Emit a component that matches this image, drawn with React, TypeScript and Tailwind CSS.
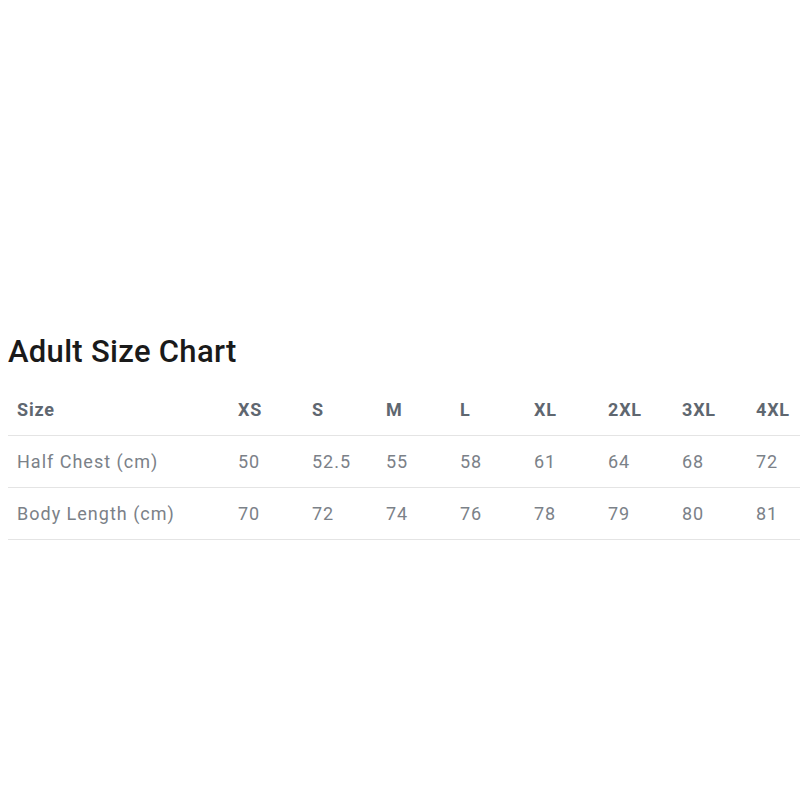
const sizes = ["XS", "S", "M", "L", "XL", "2XL", "3XL", "4XL"];

const rows = [
  { label: "Half Chest (cm)", values: ["50", "52.5", "55", "58", "61", "64", "68", "72"] },
  { label: "Body Length (cm)", values: ["70", "72", "74", "76", "78", "79", "80", "81"] },
];

export default function App() {
  return (
    <div className="w-[800px] h-[800px] overflow-hidden bg-white font-['Roboto',sans-serif]">
      <div className="pt-[332px] pl-2">
        <h2 className="text-[31px] leading-[40px] font-medium text-[#1a1a1a] tracking-[0.3px]">Adult Size Chart</h2>
        <table className="mt-[12px] w-[813px] border-collapse table-fixed">
          <colgroup>
            <col className="w-[221px]" />
            {sizes.map((s) => (
              <col key={s} className="w-[74px]" />
            ))}
          </colgroup>
          <thead>
            <tr className="border-b border-[#e4e4e4] h-[51px]">
              <th className="pl-[9px] text-left text-[18px] tracking-[0.8px] font-bold text-[#5f6770]">Size</th>
              {sizes.map((s) => (
                <th key={s} className="pl-[9px] text-left text-[18px] tracking-[0.8px] font-bold text-[#5f6770]">
                  {s}
                </th>
              ))}
            </tr>
          </thead>
          <tbody>
            {rows.map((r) => (
              <tr key={r.label} className="border-b border-[#e4e4e4] h-[52px]">
                <td className="pl-[9px] text-[18px] tracking-[1px] text-[#7b8188]">{r.label}</td>
                {r.values.map((v, i) => (
                  <td key={i} className="pl-[9px] text-[18px] tracking-[1px] text-[#7b8188]">
                    {v}
                  </td>
                ))}
              </tr>
            ))}
          </tbody>
        </table>
      </div>
    </div>
  );
}
